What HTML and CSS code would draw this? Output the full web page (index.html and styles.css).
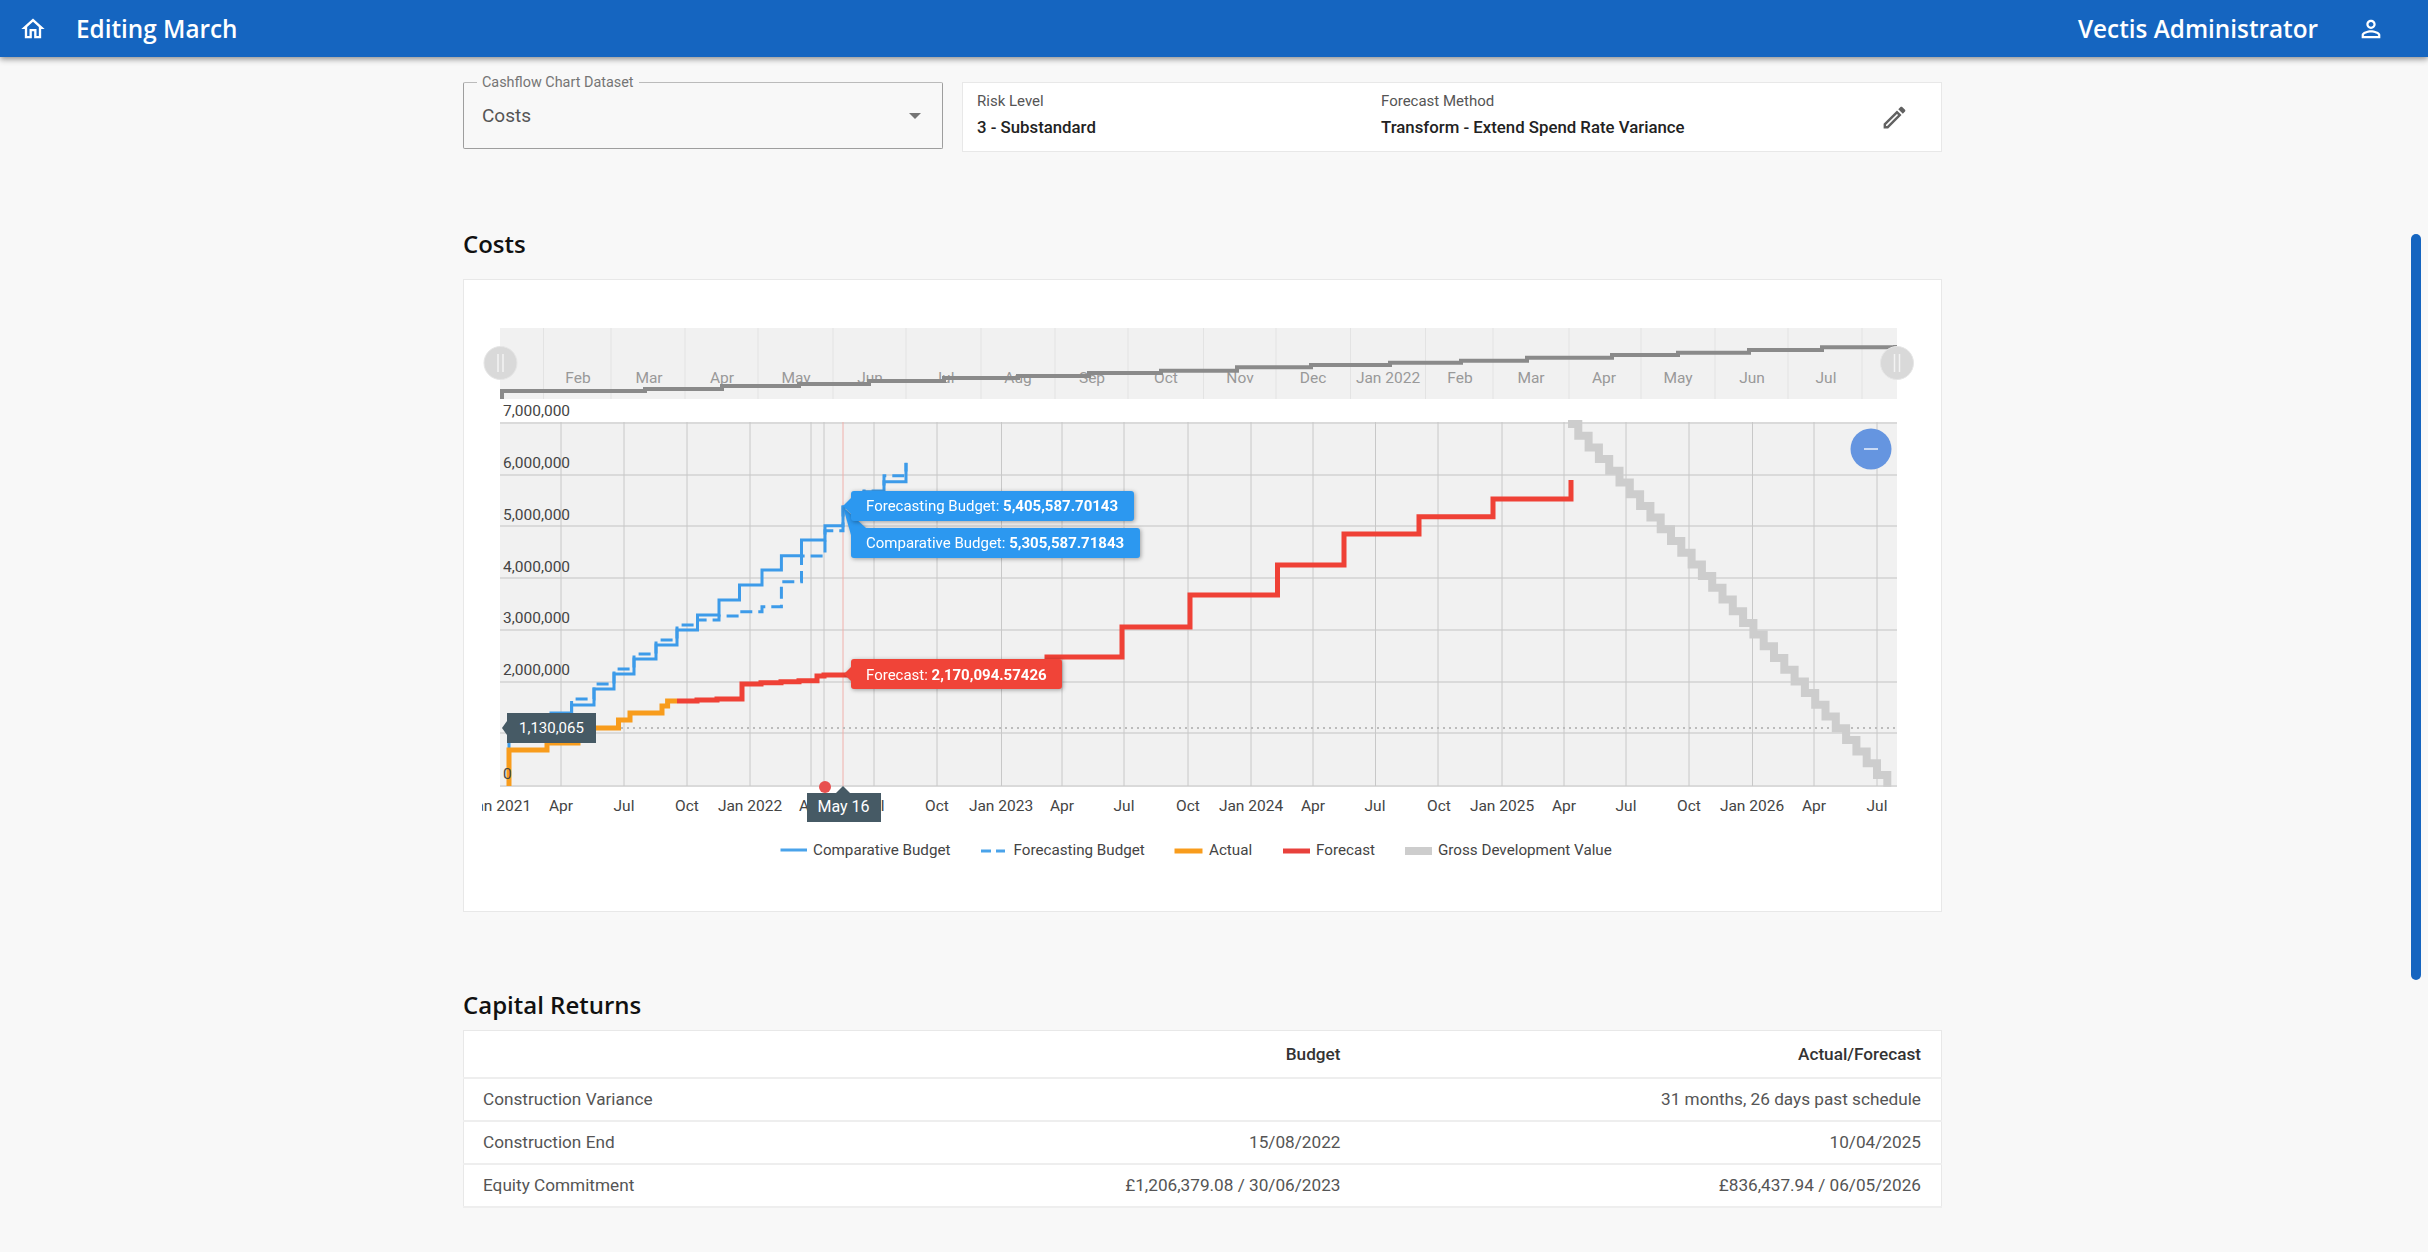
FILE: index.html
```html
<!DOCTYPE html>
<html lang="en">
<head>
  <meta charset="UTF-8" />
  <title>Editing March</title>
  <link rel="stylesheet" href="styles.css">
</head>
<body>

  <header class="topbar">
    <svg class="topbar-icon home-icon" viewBox="0 0 24 24"><path d="M12 5.69l5 4.5V18h-2v-6H9v6H7v-7.81l5-4.5M12 3L2 12h3v8h6v-6h2v6h6v-8h3L12 3z"/></svg>
    <div class="topbar-title">Editing March</div>
    <div class="topbar-user">Vectis Administrator</div>
    <svg class="topbar-icon user-icon" viewBox="0 0 24 24"><path d="M12 5.9c1.16 0 2.1.94 2.1 2.1s-.94 2.1-2.1 2.1S9.9 9.16 9.9 8s.94-2.1 2.1-2.1m0 9c2.97 0 6.1 1.46 6.1 2.1v1.1H5.9V17c0-.64 3.13-2.1 6.1-2.1M12 4C9.79 4 8 5.79 8 8s1.79 4 4 4 4-1.79 4-4-1.79-4-4-4zm0 9c-2.67 0-8 1.34-8 4v3h16v-3c0-2.66-5.33-4-8-4z"/></svg>
  </header>

  <div class="scroll-thumb"></div>

  <main class="container">
    <div class="controls">
      <div class="select">
        <span class="select-label">Cashflow Chart Dataset</span>
        <span class="select-value">Costs</span>
        <span class="select-arrow"></span>
      </div>
      <div class="summary">
        <div class="summary-item risk">
          <div class="summary-label">Risk Level</div>
          <div class="summary-value">3 - Substandard</div>
        </div>
        <div class="summary-item method">
          <div class="summary-label">Forecast Method</div>
          <div class="summary-value">Transform - Extend Spend Rate Variance</div>
        </div>
        <svg class="edit-icon" viewBox="0 0 24 24"><path d="M14.06 9.02l.92.92L5.92 19H5v-.92l9.06-9.06M17.66 3c-.25 0-.51.1-.7.29l-1.83 1.83 3.75 3.75 1.83-1.83c.39-.39.39-1.02 0-1.41l-2.34-2.34c-.2-.2-.45-.29-.71-.29zm-3.6 3.19L3 17.25V21h3.75L17.81 9.94l-3.75-3.75z"/></svg>
      </div>
    </div>

    <h2 class="section-title">Costs</h2>
    <section class="chart-card">
      <!-- viewBox uses page coordinates so the points can be read off directly -->
      <svg class="chart" viewBox="464 280 1477 631">
        <defs>
          <clipPath id="axis-clip"><rect x="482" y="790" width="1420" height="40"/></clipPath>
        </defs>

        <!-- navigator -->
        <rect class="nav-bg" x="500" y="328" width="1397" height="71"/>
        <path class="nav-grid" d="M543.5 328V399M611 328V399M685 328V399M758 328V399M833 328V399M906 328V399M981 328V399M1055 328V399M1128 328V399M1203.5 328V399M1276 328V399M1350.5 328V399M1425.5 328V399M1493 328V399M1569 328V399M1641 328V399M1715 328V399M1788 328V399M1862 328V399"/>
        <g class="nav-label">
          <text x="578" y="383">Feb</text>
          <text x="649" y="383">Mar</text>
          <text x="722" y="383">Apr</text>
          <text x="796" y="383">May</text>
          <text x="870" y="383">Jun</text>
          <text x="944" y="383">Jul</text>
          <text x="1018" y="383">Aug</text>
          <text x="1092" y="383">Sep</text>
          <text x="1166" y="383">Oct</text>
          <text x="1240" y="383">Nov</text>
          <text x="1313" y="383">Dec</text>
          <text x="1388" y="383">Jan 2022</text>
          <text x="1460" y="383">Feb</text>
          <text x="1531" y="383">Mar</text>
          <text x="1604" y="383">Apr</text>
          <text x="1678" y="383">May</text>
          <text x="1752" y="383">Jun</text>
          <text x="1826" y="383">Jul</text>
        </g>
        <path class="nav-line" d="M502 399V391H645V389H722V386H799V384H869V381H944V378H1018V376H1089V373H1161V370.7H1237V367.3H1311V365H1390V362.7H1461V360.7H1527V357.7H1612V355H1678V352.7H1749V350H1822V347.3H1895V345"/>
        <g class="nav-handle">
          <circle cx="500.5" cy="363" r="16.5"/>
          <path d="M498 354V372M503 354V372"/>
        </g>
        <g class="nav-handle">
          <circle cx="1897" cy="363" r="16.5"/>
          <path d="M1894.5 354V372M1899.5 354V372"/>
        </g>

        <!-- plot -->
        <rect class="plot-bg" x="500" y="422" width="1397" height="364"/>
        <path class="grid-y" d="M500 423H1897M500 475H1897M500 526H1897M500 578H1897M500 630H1897M500 682H1897M500 733H1897M500 786H1897"/>
        <path class="grid-x" d="M561 422V786M624 422V786M687 422V786M750 422V786M811 422V786M824 422V786M874 422V786M937 422V786M1001.5 422V786M1062 422V786M1124 422V786M1188 422V786M1251 422V786M1313 422V786M1375.5 422V786M1438 422V786M1502 422V786M1564 422V786M1626 422V786M1689 422V786M1752.5 422V786M1814 422V786M1877 422V786"/>
        <path class="crosshair" d="M843 422V786"/>
        <path class="value-line" d="M597 728H1897"/>

        <path class="series-gdv" d="M1568 424h10.3v11.7h10.3v11.7h10.3v11.7h10.3v11.7h10.3v11.7h10.3v11.7h10.3v11.7h10.3v11.7h10.3v11.7h10.3v11.7h10.3v11.7h10.3v11.7h10.3v11.7h10.3v11.7h10.3v11.7h10.3v11.7h10.3v11.7h10.3v11.7h10.3v11.7h10.3v11.7h10.3v11.7h10.3v11.7h10.3v11.7h10.3v11.7h10.3v11.7h10.3v11.7h10.3v11.7h10.3v11.7h10.3v11.7h10.3v11.7h10.3v11.7"/>
        <path class="series-comparative" d="M509 786V728H551V713H571.6V705H594V689H614V674H634V659H656V645H677V630H697.5V615H719V600H739.5V585H762V570H781.4V555.7H801.5V540H825V525.7H843V507H864V491.7H884V481.7H906V462.7"/>
        <path class="series-forecasting" d="M571.6 713V699H594V684H614V669H634V654H656V640H677V625H697.5V620H719V616H739.5V611.7H762V606.7H781.4V581.7H801.5V556H825V530.7H843V507H864V491H884V475.7H906V463"/>
        <path class="series-forecast" d="M677 701H697V700H717V699H742V684H761V682.7H781V681.7H799V680.7H817V676H824V675H851V674H1047V657H1122V627H1190V595H1277.5V565H1344V534H1419V516.7H1493V499H1571V480"/>
        <path class="series-actual" d="M509 786V750H547V743H578V728H618.5V720H630V713H662V706H667.6V701H677"/>

        <g class="y-label">
          <text x="503" y="416">7,000,000</text>
          <text x="503" y="468">6,000,000</text>
          <text x="503" y="520">5,000,000</text>
          <text x="503" y="572">4,000,000</text>
          <text x="503" y="623">3,000,000</text>
          <text x="503" y="675">2,000,000</text>
          <text x="503" y="779">0</text>
        </g>

        <circle class="marker" cx="825" cy="787" r="6"/>

        <g class="x-label" clip-path="url(#axis-clip)">
          <text x="499" y="811">Jan 2021</text>
          <text x="561" y="811">Apr</text>
          <text x="624" y="811">Jul</text>
          <text x="687" y="811">Oct</text>
          <text x="750" y="811">Jan 2022</text>
          <text x="811" y="811">Apr</text>
          <text x="874" y="811">Jul</text>
          <text x="937" y="811">Oct</text>
          <text x="1001" y="811">Jan 2023</text>
          <text x="1062" y="811">Apr</text>
          <text x="1124" y="811">Jul</text>
          <text x="1188" y="811">Oct</text>
          <text x="1251" y="811">Jan 2024</text>
          <text x="1313" y="811">Apr</text>
          <text x="1375" y="811">Jul</text>
          <text x="1439" y="811">Oct</text>
          <text x="1502" y="811">Jan 2025</text>
          <text x="1564" y="811">Apr</text>
          <text x="1626" y="811">Jul</text>
          <text x="1689" y="811">Oct</text>
          <text x="1752" y="811">Jan 2026</text>
          <text x="1814" y="811">Apr</text>
          <text x="1877" y="811">Jul</text>
        </g>

        <!-- zoom button -->
        <circle class="zoom-btn" cx="1871" cy="449" r="20.5"/>
        <path class="zoom-minus" d="M1864 449H1878"/>

        <!-- tooltips -->
        <g class="tip tip-blue">
          <path d="M851 535L843 507L866 528Z"/>
          <rect x="851" y="528" width="289" height="30" rx="3"/>
          <text x="866" y="548">Comparative Budget: <tspan class="tip-num">5,305,587.71843</tspan></text>
        </g>
        <g class="tip tip-blue">
          <path d="M851 498L843 506L851 514Z"/>
          <rect x="851" y="491" width="283" height="30" rx="3"/>
          <text x="866" y="511">Forecasting Budget: <tspan class="tip-num">5,405,587.70143</tspan></text>
        </g>
        <g class="tip tip-red">
          <path d="M851 667L844 674L851 681Z"/>
          <rect x="851" y="659" width="211" height="30" rx="3"/>
          <text x="866" y="680">Forecast: <tspan class="tip-num">2,170,094.57426</tspan></text>
        </g>
        <g class="tip tip-dark">
          <path d="M507 721L502 728L507 735Z"/>
          <rect x="507" y="713" width="89" height="30"/>
          <text x="519" y="733">1,130,065</text>
        </g>
        <g class="tip tip-dark">
          <path d="M836 793L843 786L850 793Z"/>
          <rect x="807" y="793" width="74" height="29"/>
          <text x="843.5" y="812" class="tip-center">May 16</text>
        </g>

        <!-- legend -->
        <path class="legend-comparative" d="M780.5 850H807"/>
        <text class="legend-text" x="813" y="855">Comparative Budget</text>
        <path class="legend-forecasting" d="M981 851H1005"/>
        <text class="legend-text" x="1013.5" y="855">Forecasting Budget</text>
        <path class="legend-actual" d="M1174.5 851H1202.5"/>
        <text class="legend-text" x="1209" y="855">Actual</text>
        <path class="legend-forecast" d="M1283 851H1310"/>
        <text class="legend-text" x="1316" y="855">Forecast</text>
        <path class="legend-gdv" d="M1405 851H1432"/>
        <text class="legend-text" x="1438" y="855">Gross Development Value</text>
      </svg>
    </section>

    <h2 class="section-title returns-title">Capital Returns</h2>
    <table class="returns">
      <thead>
        <tr><th></th><th>Budget</th><th class="col-actual">Actual/Forecast</th></tr>
      </thead>
      <tbody>
        <tr><td>Construction Variance</td><td></td><td>31 months, 26 days past schedule</td></tr>
        <tr><td>Construction End</td><td>15/08/2022</td><td>10/04/2025</td></tr>
        <tr><td>Equity Commitment</td><td>£1,206,379.08 / 30/06/2023</td><td>£836,437.94 / 06/05/2026</td></tr>
      </tbody>
    </table>
  </main>

</body>
</html>
```

FILE: styles.css
```css
body {
  margin: 0;
  height: 1252px;
  overflow: hidden;
  background-color: #f8f8f8;
  font-family: Roboto, sans-serif;
  color: #333;
}

.topbar {
  display: flex;
  align-items: center;
  height: 57px;
  padding: 0 43px 0 19px;
  background-color: #1565c0;
  color: white;
  box-shadow: 0 2px 6px rgba(0, 0, 0, 0.45);
  font-family: "Open Sans", sans-serif;
  font-weight: 600;
  font-size: 24.3px;
}

.topbar-icon {
  width: 28px;
  height: 28px;
  fill: white;
}

.topbar-title {
  margin-left: 29px;
}

.topbar-user {
  margin-left: auto;
  margin-right: 39px;
}

.scroll-thumb {
  position: absolute;
  top: 234px;
  left: 2411px;
  width: 10px;
  height: 746px;
  border-radius: 5px;
  background-color: #1565c0;
}

.container {
  width: 1479px;
  margin-left: 463px;
  padding-top: 25px;
}

.controls {
  display: flex;
  align-items: flex-start;
  gap: 19px;
}

.select {
  position: relative;
  display: flex;
  align-items: center;
  box-sizing: border-box;
  width: 480px;
  height: 67px;
  padding: 0 18px;
  border: 1.5px solid #9e9e9e;
  border-top-color: #bbb;
  border-radius: 2px;
}

.select-label {
  position: absolute;
  top: -8px;
  left: 13px;
  padding: 0 5px;
  background-color: #f8f8f8;
  font-size: 14.4px;
  line-height: 16px;
  color: #757575;
}

.select-value {
  font-size: 19px;
  color: #555;
}

.select-arrow {
  margin-left: auto;
  margin-right: 3px;
  border-left: 6px solid transparent;
  border-right: 6px solid transparent;
  border-top: 6px solid #757575;
}

.summary {
  flex: 1;
  display: flex;
  align-items: center;
  box-sizing: border-box;
  height: 70px;
  padding: 0 32px 5px 14px;
  background-color: white;
  border: 1px solid #e8e8e8;
}

.summary-item.risk {
  width: 404px;
}

.summary-label {
  font-size: 15px;
  color: #555;
  margin-bottom: 7px;
}

.summary-value {
  font-size: 16.8px;
  font-weight: 500;
  color: #222;
}

.edit-icon {
  width: 29px;
  height: 29px;
  margin-top: 5px;
  margin-left: auto;
  fill: #616161;
}

.section-title {
  margin: 77px 0 20px;
  font-family: "Open Sans", sans-serif;
  font-weight: 600;
  font-size: 24px;
  line-height: 30px;
  color: #111;
}

.returns-title {
  margin: 78px 0 10px;
}

.chart-card {
  box-sizing: border-box;
  height: 633px;
  background-color: white;
  border: 1px solid #e8e8e8;
}

.chart {
  display: block;
  width: 1477px;
  height: 631px;
}

.chart text {
  font-family: Roboto, sans-serif;
  font-size: 15.2px;
}

.nav-bg, .plot-bg {
  fill: #f1f1f1;
}

.nav-grid {
  stroke: #e3e3e3;
  stroke-width: 1;
}

.nav-label text {
  fill: #999;
  text-anchor: middle;
  font-size: 15.5px;
}

.nav-line {
  fill: none;
  stroke: #8a8a8a;
  stroke-width: 4;
}

.nav-handle circle {
  fill: #d9d9d9;
  stroke: #e6e6e6;
  stroke-width: 1;
}

.nav-handle path {
  stroke: #f3f3f3;
  stroke-width: 1.5;
}

.grid-y {
  stroke: #dadada;
  stroke-width: 2;
}

.grid-x {
  stroke: #c8c8c8;
  stroke-width: 1;
}

.crosshair {
  stroke: #f0b0ab;
  stroke-width: 1;
}

.value-line {
  stroke: #bbb;
  stroke-width: 2;
  stroke-dasharray: 2 4;
}

.y-label text {
  fill: #444;
  font-size: 15.5px;
}

.x-label text {
  fill: #444;
  text-anchor: middle;
  font-size: 15.5px;
}

.series-gdv, .series-comparative, .series-forecasting,
.series-forecast, .series-actual {
  fill: none;
}

.series-gdv {
  stroke: #cdcdcd;
  stroke-width: 8;
}

.series-comparative {
  stroke: #3d9be9;
  stroke-width: 3;
}

.series-forecasting {
  stroke: #3d9be9;
  stroke-width: 3;
  stroke-dasharray: 12 6;
}

.series-forecast {
  stroke: #ef4136;
  stroke-width: 5;
}

.series-actual {
  stroke: #f89c1c;
  stroke-width: 5;
}

.marker {
  fill: #e8504f;
}

.zoom-btn {
  fill: #6595e0;
}

.zoom-minus {
  stroke: #c9daf5;
  stroke-width: 2;
}

.tip text {
  fill: white;
  font-size: 15px;
}

.tip-num {
  font-weight: 700;
}

.tip-blue {
  fill: #2c98f0;
  filter: drop-shadow(1px 1px 2px rgba(0, 0, 0, 0.35));
}

.tip-red {
  fill: #f04438;
  filter: drop-shadow(1px 1px 2px rgba(0, 0, 0, 0.35));
}

.tip-dark {
  fill: #465a65;
}

.chart .tip-center {
  text-anchor: middle;
  font-size: 16px;
}

.legend-text {
  fill: #444;
}

.legend-comparative {
  stroke: #4aa3ea;
  stroke-width: 3;
}

.legend-forecasting {
  stroke: #4aa3ea;
  stroke-width: 3;
  stroke-dasharray: 10 5;
}

.legend-actual {
  stroke: #f89c1c;
  stroke-width: 5;
}

.legend-forecast {
  stroke: #e8413c;
  stroke-width: 5;
}

.legend-gdv {
  stroke: #cdcdcd;
  stroke-width: 8;
}

.returns {
  width: 100%;
  height: 177px;
  border-collapse: collapse;
  background-color: white;
  border: 1px solid #e8e8e8;
  font-size: 17.2px;
  color: #555;
}

.returns th, .returns td {
  box-sizing: border-box;
  padding: 0 20px 0 19px;
  text-align: right;
  border-bottom: 2px solid #eee;
}

.returns th {
  height: 47px;
  font-weight: 500;
  color: #333;
}

.returns td {
  height: 43px;
}

.returns td:first-child {
  text-align: left;
}

.returns .col-actual {
  width: 581px;
}
```
